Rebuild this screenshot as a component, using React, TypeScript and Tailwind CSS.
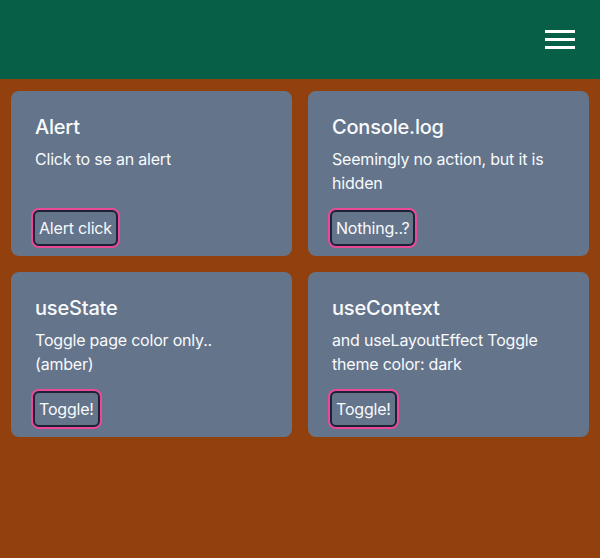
const cards = [
  { title: 'Alert', text: 'Click to se an alert', button: 'Alert click' },
  { title: 'Console.log', text: 'Seemingly no action, but it is hidden', button: 'Nothing..?' },
  { title: 'useState', text: 'Toggle page color only.. (amber)', button: 'Toggle!' },
  { title: 'useContext', text: 'and useLayoutEffect Toggle theme color: dark', button: 'Toggle!' },
];

function Card({ title, text, button }: { title: string; text: string; button: string }) {
  return (
    <div className="flex flex-1 flex-col rounded-lg bg-[#64748b] px-6 pt-6 pb-2.5 text-slate-50 tracking-[-0.2px]">
      <h2 className="mb-1 text-xl font-medium leading-6 pb-1">{title}</h2>
      <p className="text-base leading-6">{text}</p>
      <button className="mt-auto -ml-0.5 self-start rounded-md border-2 border-[#1e2235] px-1 py-1 text-base leading-6 ring-2 ring-[#ec4899]">
        {button}
      </button>
    </div>
  );
}

export default function App() {
  return (
    <div className="min-h-[558px] bg-[#92400e] font-['Inter',sans-serif]">
      <header className="flex h-[79px] items-center justify-end bg-[#065f46] pr-[25px]">
        <button className="flex w-[30px] flex-col gap-[5px]" aria-label="menu">
          <span className="block h-[3px] w-full bg-white" />
          <span className="block h-[3px] w-full bg-white" />
          <span className="block h-[3px] w-full bg-white" />
        </button>
      </header>
      <main className="grid grid-cols-2 gap-4 p-[11px] pt-3">
        {cards.map((c) => (
          <div key={c.title} className="flex min-h-[165px] flex-col">
            <Card {...c} />
          </div>
        ))}
      </main>
    </div>
  );
}
